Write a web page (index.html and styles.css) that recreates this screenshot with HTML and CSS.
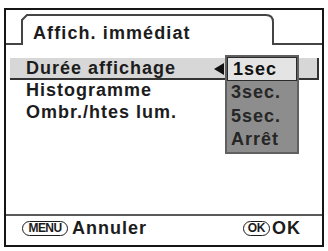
FILE: index.html
```html
<!DOCTYPE html>
<html lang="fr">
<head>
<meta charset="utf-8">
<title>Affich. immédiat</title>
<link rel="stylesheet" href="styles.css">
</head>
<body>
<div class="frame">
  <div class="header">
    <div class="header-line left"></div>
    <div class="tab">
      <svg class="tab-outline" width="253" height="31" viewBox="0 0 253 31"><path d="M1,31 V6 L6,1 H245 Q252,1 252,8 V31" fill="none" stroke="#444" stroke-width="2"/></svg>
      <span class="title">Affich. immédiat</span>
    </div>
    <div class="header-line right"></div>
  </div>
  <div class="content">
    <div class="row selected"><span>Durée affichage</span></div>
    <div class="row"><span>Histogramme</span></div>
    <div class="row"><span>Ombr./htes lum.</span></div>
    <div class="popup">
      <div class="arrow"></div>
      <div class="options">
        <div class="option current">1sec</div>
        <div class="option">3sec.</div>
        <div class="option">5sec.</div>
        <div class="option">Arrêt</div>
      </div>
    </div>
  </div>
  <div class="footer">
    <div class="action">
      <span class="pill menu">MENU</span>
      <span class="label">Annuler</span>
    </div>
    <div class="action ok-action">
      <span class="pill ok">OK</span>
      <span class="label">OK</span>
    </div>
  </div>
</div>
</body>
</html>
```
FILE: styles.css
```css
html, body {
  margin: 0;
  padding: 0;
  background: #fff;
}
body {
  width: 328px;
  height: 251px;
  overflow: hidden;
  font-family: "Liberation Sans", Arial, sans-serif;
  font-weight: bold;
  color: #1c1c1c;
}
.frame {
  margin: 8px 4px 0 4px;
  width: 316px;
  height: 235px;
  border: 2px solid #151515;
  display: flex;
  flex-direction: column;
}
.header {
  height: 35px;
  display: flex;
  align-items: flex-end;
  flex: none;
}
.header-line {
  height: 0;
  border-bottom: 2px solid #444;
}
.header-line.left {
  width: 15px;
}
.header-line.right {
  flex: 1;
}
.tab {
  position: relative;
  width: 253px;
  height: 31px;
  box-sizing: border-box;
  padding-left: 12px;
  padding-top: 9px;
}
.tab-outline {
  position: absolute;
  left: 0;
  top: 0;
}
.title {
  position: relative;
  font-size: 18px;
  line-height: 20px;
  letter-spacing: 1.1px;
  display: block;
}
.content {
  position: relative;
  flex: 1;
  padding-top: 13px;
}
.row {
  height: 22px;
  box-sizing: border-box;
  margin: 0 3px 0 4px;
  padding-left: 16px;
  font-size: 18px;
  line-height: 20px;
  letter-spacing: 1px;
}
.row.selected {
  background: #d7d7d7;
  border-bottom: 2px solid #333;
  border-right: 2px solid #333;
}
.popup {
  position: absolute;
  left: 208px;
  top: 10px;
  display: flex;
  align-items: flex-start;
}
.arrow {
  width: 0;
  height: 0;
  margin-top: 8px;
  margin-right: 1px;
  border-top: 6px solid transparent;
  border-bottom: 6px solid transparent;
  border-right: 10px solid #111;
}
.options {
  width: 70px;
  background: #8d8d8d;
  border: 2px solid #606060;
}
.option {
  height: 23.5px;
  box-sizing: border-box;
  padding-left: 4px;
  font-size: 18px;
  line-height: 23.5px;
  letter-spacing: 1px;
  color: #262626;
}
.option.current {
  height: 24px;
  background: #e4e4e4;
  border: 1px solid #2a2a2a;
  line-height: 22px;
  padding-left: 5px;
  color: #111;
}
.footer {
  flex: none;
  height: 31px;
  box-sizing: border-box;
  border-top: 2px solid #5a5a5a;
  display: flex;
  align-items: center;
  justify-content: space-between;
  padding: 0 21px 5px 16px;
}
.action {
  display: flex;
  align-items: center;
  gap: 4px;
}
.action.ok-action {
  gap: 2px;
}
.pill {
  box-sizing: border-box;
  height: 15px;
  border: 1.5px solid #1c1c1c;
  border-radius: 8px;
  font-size: 12px;
  line-height: 12px;
  display: flex;
  align-items: center;
  justify-content: center;
}
.pill.menu {
  width: 46px;
  letter-spacing: -0.6px;
}
.pill.ok {
  width: 27px;
  letter-spacing: -0.3px;
}
.label {
  font-size: 18px;
  line-height: 20px;
  letter-spacing: 1px;
}
```
